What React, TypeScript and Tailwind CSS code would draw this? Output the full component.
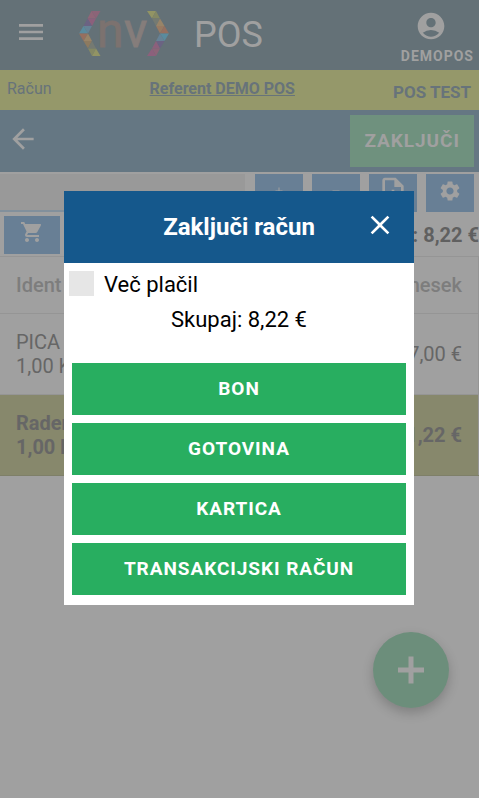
import { useState } from 'react';
import {
  MdAccountCircle,
  MdAdd,
  MdArrowBack,
  MdClose,
  MdMenu,
  MdOutlineNoteAdd,
  MdRemove,
  MdSettings,
  MdShoppingCart,
} from 'react-icons/md';

const PAYMENT_TYPES = ['BON', 'GOTOVINA', 'KARTICA', 'TRANSAKCIJSKI RAČUN'];

const ITEMS = [
  { name: 'PICA', quantity: '1,00 KOS', amount: '7,00 €', selected: false },
  { name: 'Radenska', quantity: '1,00 kos', amount: '1,22 €', selected: true },
];

const TOOLS = [
  { label: 'Dodaj', Icon: MdAdd, size: 12 },
  { label: 'Odstrani', Icon: MdRemove, size: 12 },
  { label: 'Nov dokument', Icon: MdOutlineNoteAdd, size: 32 },
  { label: 'Nastavitve', Icon: MdSettings, size: 24 },
];

function Logo() {
  return (
    <svg
      width="90"
      height="46"
      viewBox="0 0 90 46"
      aria-label="nv"
      className="-mt-0.5 shrink-0 overflow-visible"
    >
      {/* left bracket */}
      <path d="M12.500 0H21.500L17 7.500Z" fill="#8c6478" />
      <path d="M12.500 0L17 7.500H8.500Z" fill="#906678" />
      <path d="M8.500 7.500H17L13 15Z" fill="#8c607c" />
      <path d="M8.500 7.500L13 15H4.500Z" fill="#6b6383" />
      <path d="M4.500 15H13L9 22.500Z" fill="#668296" />
      <path d="M4.500 15L9 22.500H0Z" fill="#5a8b9e" />
      <path d="M0 22.500H9L4.500 30Z" fill="#966f5f" />
      <path d="M9 22.500L13 30H4.500Z" fill="#988468" />
      <path d="M4.500 30H13L9 37.500Z" fill="#8c7a60" />
      <path d="M13 30L17 37.500H9Z" fill="#757a72" />
      <path d="M9 37.500H17L13 45Z" fill="#848864" />
      <path d="M17 37.500L21.500 45H13Z" fill="#929464" />
      {/* right bracket */}
      <path d="M68 0H77L73 7.500Z" fill="#929464" />
      <path d="M77 0L81 7.500H73Z" fill="#848864" />
      <path d="M73 7.500H81L77 15Z" fill="#757a72" />
      <path d="M81 7.500L85.500 15H77Z" fill="#988468" />
      <path d="M77 15H85.500L81 22.500Z" fill="#987a62" />
      <path d="M85.500 15L90 22.500H81Z" fill="#966f5f" />
      <path d="M81 22.500H90L85.500 30Z" fill="#5a8b9e" />
      <path d="M81 22.500L85.500 30H77Z" fill="#668296" />
      <path d="M77 30H85.500L81 37.500Z" fill="#6b6383" />
      <path d="M77 30L81 37.500H73Z" fill="#8c607c" />
      <path d="M73 37.500H81L77 45Z" fill="#8c6478" />
      <path d="M73 37.500L77 45H68Z" fill="#8c607c" />
      <text y="36" fontSize="48" fontFamily="Roboto, sans-serif" strokeWidth="0.8">
        <tspan x="18" fill="#7c726f" stroke="#7c726f">
          n
        </tspan>
        <tspan x="45" fill="#857d7b" stroke="#857d7b">
          v
        </tspan>
      </text>
    </svg>
  );
}

function TopBar() {
  return (
    <header className="flex h-[70px] items-center bg-[#647177] pl-[15px] pr-[5px] text-[#a0a0a0]">
      <button type="button" aria-label="Meni" className="-mt-1.5">
        <MdMenu size={32} />
      </button>
      <div className="ml-8 flex items-center gap-[25px]">
        <Logo />
        <h1 className="text-4xl">POS</h1>
      </div>
      <button
        type="button"
        className="ml-auto mt-1.5 flex flex-col text-sm font-bold leading-5 tracking-[1px]"
      >
        <MdAccountCircle size={32} className="ml-3.5" />
        <span className="mt-1">DEMOPOS</span>
      </button>
    </header>
  );
}

function InfoBar() {
  return (
    <div className="flex h-10 justify-between bg-[#95986a] pl-[7px] pr-2 text-base text-[#67737a]">
      <span className="pt-[7px]">Račun</span>
      <a href="#referent" className="pt-[7px] font-bold underline">
        Referent DEMO POS
      </a>
      <span className="pt-2.5 text-[17px] font-bold">POS TEST</span>
    </div>
  );
}

function ActionBar() {
  return (
    <div className="flex h-[62px] items-center justify-between bg-[#657783] pl-[7px] pr-[5px] text-[#a0a0a0]">
      <button type="button" aria-label="Nazaj" className="-mt-1">
        <MdArrowBack size={32} />
      </button>
      <button
        type="button"
        className="h-[52px] bg-[#6f917e] px-3.5 text-[19px] font-bold tracking-wider"
      >
        ZAKLJUČI
      </button>
    </div>
  );
}

function Toolbar() {
  return (
    <>
      <div className="flex gap-2.5 pr-[5px] pt-0.5">
        <input
          type="text"
          aria-label="Iskanje artikla"
          className="h-[38px] min-w-0 flex-1 border-b-2 border-[#82909c] bg-[#999999]"
        />
        <div className="flex gap-[9px]">
          {TOOLS.map(({ label, Icon, size }) => (
            <button
              key={label}
              type="button"
              aria-label={label}
              className="flex h-[38px] w-12 items-center justify-center bg-[#687f95] pb-1 text-[#a0a0a0]"
            >
              <Icon size={size} />
            </button>
          ))}
        </div>
      </div>
      <div className="flex items-center justify-between pb-0.5 pl-1 pt-1">
        <button
          type="button"
          aria-label="Košarica"
          className="flex h-[38px] w-14 justify-center bg-[#687f95] pt-1 text-[#a0a0a0]"
        >
          <MdShoppingCart size={24} />
        </button>
        <strong className="text-xl text-[#606060]">Skupaj: 8,22 €</strong>
      </div>
    </>
  );
}

function ItemsTable() {
  return (
    <table className="w-full border-r border-t border-[#959595] text-xl leading-6 text-[#666666]">
      <thead>
        <tr className="h-[57px] border-b border-[#959595] text-[#7d7d7d]">
          <th className="px-4 text-left font-medium">Ident</th>
          <th className="px-4 text-right font-medium">Znesek</th>
        </tr>
      </thead>
      <tbody>
        {ITEMS.map((item) => (
          <tr
            key={item.name}
            className={
              item.selected
                ? 'h-[81px] border-b border-[#7e7f68] bg-[#87886c] font-bold'
                : 'h-[81px] border-b border-[#959595]'
            }
          >
            <td className="px-4">
              {item.name}
              <br />
              {item.quantity}
            </td>
            <td className="px-4 text-right">{item.amount}</td>
          </tr>
        ))}
      </tbody>
    </table>
  );
}

function PaymentDialog() {
  const [multiple, setMultiple] = useState(false);

  return (
    <div className="fixed inset-0 flex items-center pb-0.5 pl-16 pr-[65px]">
      <div
        role="dialog"
        aria-modal="true"
        aria-labelledby="payment-title"
        className="w-full bg-white text-black"
      >
        <div className="relative flex h-[72px] items-center justify-center bg-[#15588c] text-white">
          <h2 id="payment-title" className="text-2xl font-bold">
            Zaključi račun
          </h2>
          <button type="button" aria-label="Zapri" className="absolute right-[18px] top-[18px]">
            <MdClose size={32} />
          </button>
        </div>

        <div className="px-2 pb-2.5 pt-2">
          <label className="-ml-[3px] flex items-center gap-2.5 text-[22px] leading-7">
            <input
              type="checkbox"
              checked={multiple}
              onChange={(e) => setMultiple(e.target.checked)}
              className="-mt-1 size-[25px] appearance-none bg-[#e6e6e6] checked:bg-[#15588c]"
            />
            Več plačil
          </label>
          <p className="mt-1.5 text-center text-[22px] leading-[30px]">Skupaj: 8,22 €</p>

          <div className="mt-7 flex flex-col gap-2">
            {PAYMENT_TYPES.map((type) => (
              <button
                key={type}
                type="button"
                className="h-[52px] bg-[#28ae60] text-[19px] font-bold tracking-wider text-white"
              >
                {type}
              </button>
            ))}
          </div>
        </div>
      </div>
    </div>
  );
}

export default function App() {
  return (
    <div className="min-h-screen bg-[#a0a0a0] font-[Roboto,sans-serif]">
      <TopBar />
      <InfoBar />
      <ActionBar />
      <Toolbar />
      <ItemsTable />
      <button
        type="button"
        aria-label="Dodaj artikel"
        className="fixed bottom-[90px] right-[30px] flex size-[76px] items-center justify-center rounded-full bg-[#6c8e7b] text-[#a0a0a0] shadow-[0_5px_12px_rgba(0,0,0,0.2)]"
      >
        <svg width="28" height="28" viewBox="0 0 28 28" stroke="currentColor" strokeWidth="5">
          <path d="M14 0.500V27.500M1 14H27" />
        </svg>
      </button>
      <PaymentDialog />
    </div>
  );
}
